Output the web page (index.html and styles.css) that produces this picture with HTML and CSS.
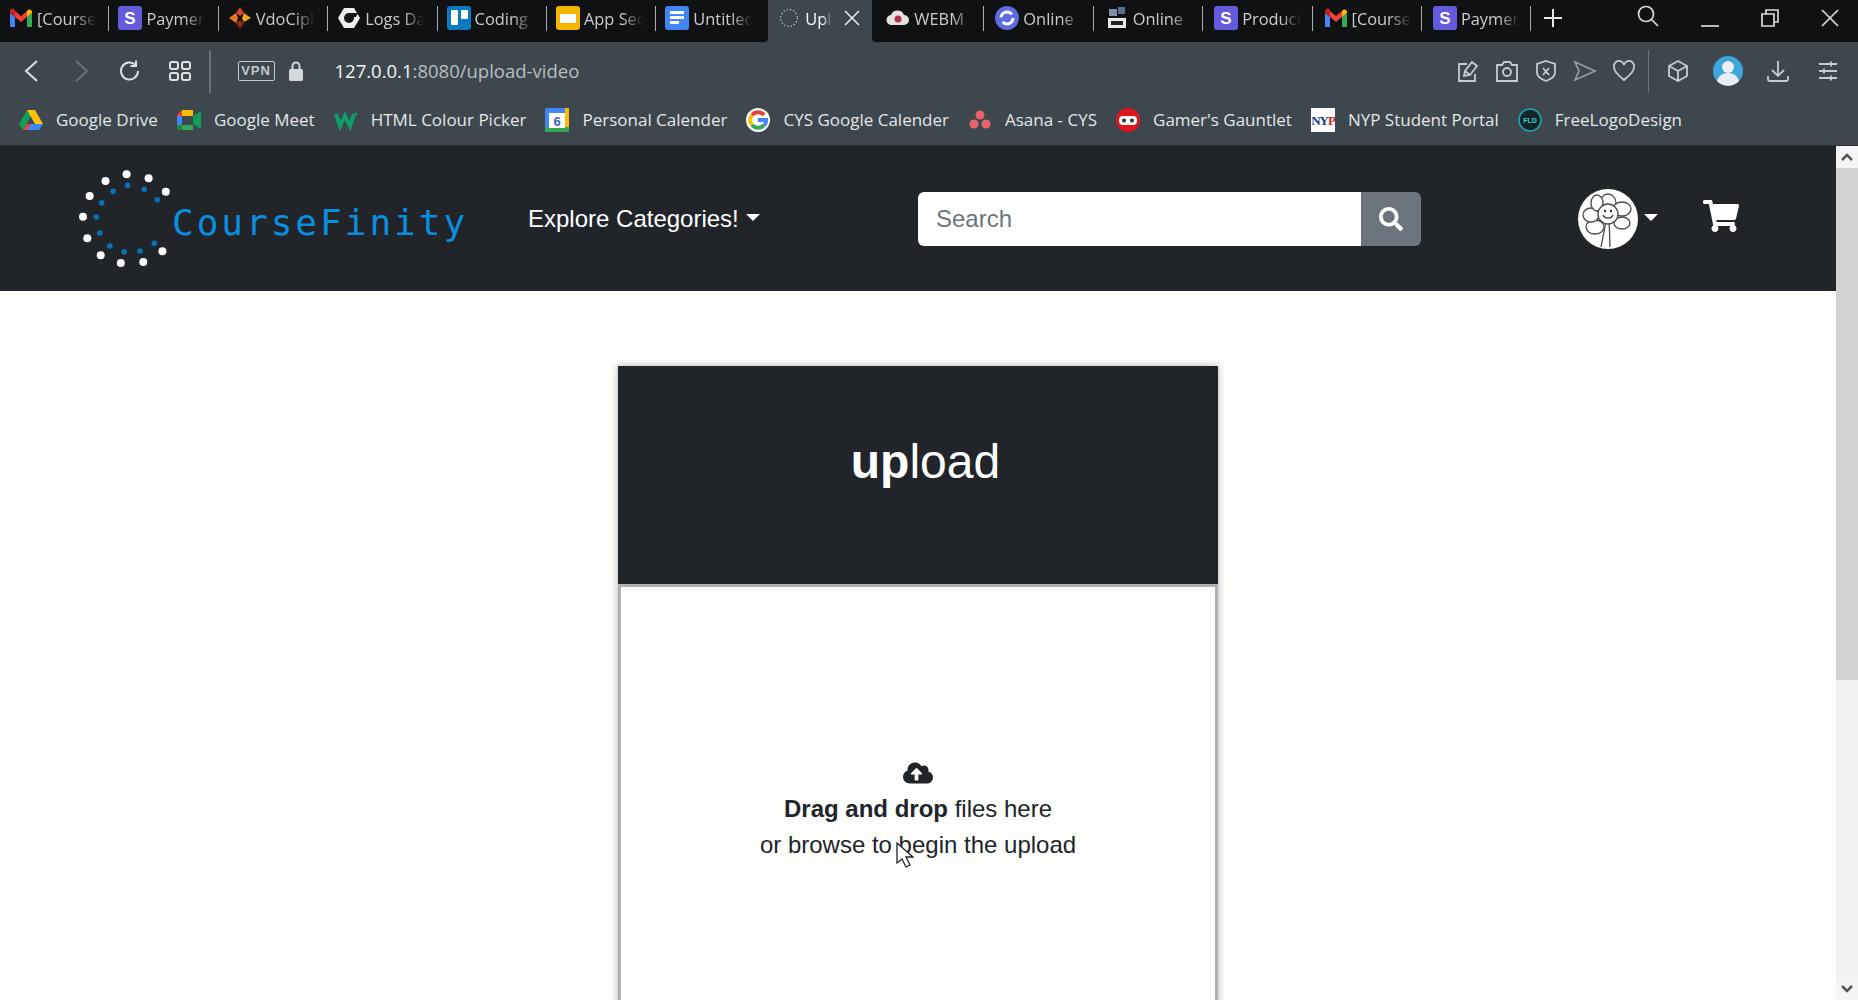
FILE: index.html
```html
<!DOCTYPE html>
<html lang="en">
<head>
    <meta charset="utf-8">
    <title>CourseFinity - upload video</title>
    <link rel="stylesheet" href="styles.css">
</head>
<body>
<svg class="defs" width="0" height="0">
    <symbol id="gmail" viewBox="0 0 24 20">
        <path fill="#4285f4" d="M1 19V5l5 4v10H2a1 1 0 0 1-1-1z"/>
        <path fill="#34a853" d="M18 19V9l5-4v13a1 1 0 0 1-1 1z"/>
        <path fill="#ea4335" d="M6 9V3l6 5 6-5v6l-6 5z"/>
        <path fill="#c5221f" d="M1 5V3c0-2 2.500-3 4-2l1 1v7z"/>
        <path fill="#fbbc04" d="M18 3l1-1c1.500-1 4 0 4 2v1l-5 4z"/>
    </symbol>
    <symbol id="stripe" viewBox="0 0 24 24">
        <rect width="24" height="24" rx="3" fill="#635bdb"/>
        <text x="12" y="18" text-anchor="middle" class="stripe-s">S</text>
    </symbol>
</svg>

<div class="tabbar">
    <div class="tabgroup">
        <div class="tab"><svg class="fav fav-mail"><use href="#gmail"/></svg><span class="tabname">[Course</span></div>
        <div class="tab"><svg class="fav"><use href="#stripe"/></svg><span class="tabname">Payment</span></div>
        <div class="tab">
            <svg class="fav" viewBox="0 0 24 24"><path fill="#d9452b" d="M12 1l4 6-4 3-4-3z"/><path fill="#f2a51f" d="M23 12l-7 4-2-4 2-5z"/><path fill="#8c2a1a" d="M12 23l-4-6 4-3 4 3z"/><path fill="#e8791d" d="M1 12l7-5 2 5-2 5z"/></svg>
            <span class="tabname">VdoCipher</span>
        </div>
        <div class="tab">
            <svg class="fav" viewBox="0 0 24 24"><path fill="#eee" d="M7 2h10l6 10-6 10H7L1 12z"/><circle cx="12" cy="12" r="5" fill="#15171a"/><path fill="#15171a" d="M12 7h9l-2 4h-7z"/></svg>
            <span class="tabname">Logs Data</span>
        </div>
        <div class="tab">
            <svg class="fav" viewBox="0 0 24 24"><rect width="24" height="24" rx="3" fill="#0a79bf"/><rect x="4" y="4" width="7" height="15" rx="1" fill="#fff"/><rect x="14" y="4" width="7" height="9" rx="1" fill="#fff"/></svg>
            <span class="tabname">Coding</span>
        </div>
        <div class="tab">
            <svg class="fav" viewBox="0 0 24 24"><rect width="24" height="24" rx="3" fill="#f4b400"/><rect x="4" y="8" width="16" height="9" fill="#fff"/></svg>
            <span class="tabname">App Sec</span>
        </div>
        <div class="tab tab-noline">
            <svg class="fav" viewBox="0 0 24 24"><rect width="24" height="24" rx="3" fill="#4285f4"/><rect x="5" y="5" width="14" height="3" fill="#fff"/><rect x="5" y="10" width="14" height="3" fill="#fff"/><rect x="5" y="15" width="9" height="3" fill="#fff"/></svg>
            <span class="tabname">Untitled</span>
        </div>
    </div>
    <div class="tab-active">
        <svg class="fav spinner" viewBox="0 0 24 24"><circle cx="12" cy="12" r="10" fill="none" stroke="#cfd3d6" stroke-width="1.500" stroke-dasharray="1.500 2.500"/></svg>
        <span class="tabname tabname-short">Upload</span>
        <svg class="tabclose" viewBox="0 0 16 16"><path d="M1 1l14 14M15 1L1 15"/></svg>
    </div>
    <div class="tabgroup tabgroup-right">
        <div class="tab">
            <svg class="fav" viewBox="0 0 24 24"><path fill="#e6e2e2" d="M6 19a5 5 0 0 1-1-10 7 7 0 0 1 13 0 5 5 0 0 1 0 10z"/><circle cx="12" cy="13" r="3.500" fill="#b5304a"/></svg>
            <span class="tabname">WEBM</span>
        </div>
        <div class="tab">
            <svg class="fav" viewBox="0 0 24 24"><circle cx="12" cy="12" r="12" fill="#5c6ce0"/><circle cx="12" cy="12" r="6" fill="none" stroke="#fff" stroke-width="3" stroke-dasharray="14 5"/></svg>
            <span class="tabname">Online</span>
        </div>
        <div class="tab">
            <svg class="fav" viewBox="0 0 24 24"><rect x="4" y="3" width="8" height="7" fill="#7d8fa8"/><rect x="13" y="1" width="7" height="7" fill="#5a6f8e"/><rect x="3" y="12" width="18" height="10" fill="#e8e8e8"/><rect x="6" y="15" width="12" height="4" fill="#222"/></svg>
            <span class="tabname">Online</span>
        </div>
        <div class="tab"><svg class="fav"><use href="#stripe"/></svg><span class="tabname">Product</span></div>
        <div class="tab"><svg class="fav fav-mail"><use href="#gmail"/></svg><span class="tabname">[Course</span></div>
        <div class="tab"><svg class="fav"><use href="#stripe"/></svg><span class="tabname">Payment</span></div>
        <svg class="newtab" viewBox="0 0 18 18"><path d="M9 0v18M0 9h18"/></svg>
        <div class="winbtns">
            <svg class="winbtn" viewBox="0 0 22 22"><circle cx="9" cy="9" r="7.500"/><path d="M14.500 14.500L21 21"/></svg>
            <svg class="winbtn" viewBox="0 0 18 18"><path d="M0 17h18"/></svg>
            <svg class="winbtn" viewBox="0 0 18 18"><path d="M1 5h12v12H1zM5 5V1h12v12h-4"/></svg>
            <svg class="winbtn" viewBox="0 0 18 18"><path d="M1 1l16 16M17 1L1 17"/></svg>
        </div>
    </div>
</div>

<div class="toolbar">
    <div class="navbtns">
        <svg class="tool" viewBox="0 0 24 24"><path d="M18 2L7 12l11 10"/></svg>
        <svg class="tool tool-off" viewBox="0 0 24 24"><path d="M7 2l11 10L7 22"/></svg>
        <svg class="tool" viewBox="0 0 24 24"><path d="M20 12a8.500 8.500 0 1 1-2.500-6M18 1.500V7h-5.500"/></svg>
        <svg class="tool" viewBox="0 0 24 24"><rect x="2" y="3" width="8" height="7" rx="2"/><rect x="14" y="3" width="8" height="7" rx="2"/><rect x="2" y="14" width="8" height="7" rx="2"/><rect x="14" y="14" width="8" height="7" rx="2"/></svg>
    </div>
    <div class="vline"></div>
    <span class="vpn">VPN</span>
    <svg class="lock" viewBox="0 0 14 20"><path fill="none" stroke="#d5d8da" stroke-width="2" d="M3.500 9V5a3.500 3.500 0 0 1 7 0v4"/><rect y="8" width="14" height="12" rx="1.500" fill="#d5d8da"/></svg>
    <div class="url">127.0.0.1<span class="url-path">:8080/upload-video</span></div>
    <div class="tools-right">
        <div class="toolset">
            <svg class="tool tool-dim" viewBox="0 0 24 24"><path d="M11 5H3v17h16v-7M8 17l1-5 7-9 5 4-7 9zM9 12l5 4"/></svg>
            <svg class="tool tool-dim" viewBox="0 0 24 24"><path d="M2 6h5l2-3h6l2 3h5v16H2z"/><circle cx="12" cy="13" r="4"/></svg>
            <svg class="tool tool-dim" viewBox="0 0 24 24"><path d="M12 2l9 3v9c0 4-4 6-9 8-5-2-9-4-9-8V5zM9 9l6 7M15 9l-6 7"/></svg>
            <svg class="tool tool-faint" viewBox="0 0 24 24"><path d="M2 3l20 9-20 9 4-9z"/></svg>
            <svg class="tool tool-dim" viewBox="0 0 24 24"><path d="M12 21C5 15 2 12 2 8a5 5 0 0 1 10-2 5 5 0 0 1 10 2c0 4-3 7-10 13z"/></svg>
        </div>
        <div class="vline vline-right"></div>
        <div class="toolset toolset-wide">
            <svg class="tool tool-dim" viewBox="0 0 24 24"><path d="M12 2l9 5v10l-9 5-9-5V7zM3 7l9 5 9-5M12 12v10"/></svg>
            <svg class="profile" viewBox="0 0 30 30"><circle cx="15" cy="15" r="15" fill="#3ea6dc"/><circle cx="15" cy="11" r="6" fill="#e9eff2"/><path fill="#e9eff2" d="M4 25c2-6 6-8 11-8s9 2 11 8a15 15 0 0 1-22 0z"/></svg>
            <svg class="tool tool-dim" viewBox="0 0 24 24"><path d="M12 2v14M6 11l6 6 6-6M2 17v3a2 2 0 0 0 2 2h16a2 2 0 0 0 2-2v-3"/></svg>
            <svg class="tool tool-dim tool-last" viewBox="0 0 24 24"><path d="M3 5h18M3 12h18M3 19h18M15 2.500v5M8 9.500v5M15 16.500v5"/></svg>
        </div>
    </div>
</div>

<div class="bookmarks">
    <a class="bm">
        <svg class="fav" viewBox="0 0 24 24"><path fill="#0f9d58" d="M8 2L0 16l4 6 8-14z"/><path fill="#ffc107" d="M8 2h8l8 14h-8z"/><path fill="#4285f4" d="M4 22l4-6h16l-4 6z"/><path fill="#ea4335" d="M4 22l4-6h4l-4 6z"/></svg>
        Google Drive
    </a>
    <a class="bm">
        <svg class="fav" viewBox="0 0 24 24"><path fill="#fbbc04" d="M5 2h11v6H5z"/><path fill="#ea4335" d="M0 7l5-5v6H0z"/><path fill="#4285f4" d="M0 8h5v9H0z"/><path fill="#34a853" d="M5 17h11v5H5z"/><path fill="#0f9d58" d="M16 8l8-5v18l-8-5z"/><path fill="#1e8e3e" d="M0 17h5v5H2a2 2 0 0 1-2-2z"/></svg>
        Google Meet
    </a>
    <a class="bm">
        <svg class="fav" viewBox="0 0 24 24"><path fill="none" stroke="#0f9d6b" stroke-width="4" d="M2 6l4 12 5-10 5 10 4-12"/><circle cx="22" cy="6" r="1.500" fill="#0f9d6b"/></svg>
        HTML Colour Picker
    </a>
    <a class="bm">
        <svg class="fav" viewBox="0 0 24 24"><rect width="24" height="24" rx="2" fill="#4285f4"/><rect x="0" y="19" width="24" height="5" fill="#34a853"/><rect x="20" y="0" width="4" height="19" fill="#fbbc04"/><rect x="4" y="5" width="16" height="15" fill="#fff"/><text x="12" y="18" text-anchor="middle" class="cal-num">6</text></svg>
        Personal Calender
    </a>
    <a class="bm">
        <svg class="fav" viewBox="0 0 24 24"><circle cx="12" cy="12" r="12" fill="#fff"/><path fill="none" stroke="#ea4335" stroke-width="4" d="M18 7a8 8 0 0 0-12 0"/><path fill="none" stroke="#fbbc04" stroke-width="4" d="M6 7a8 8 0 0 0 0 10"/><path fill="none" stroke="#34a853" stroke-width="4" d="M6 17a8 8 0 0 0 12 0"/><path fill="none" stroke="#4285f4" stroke-width="4" d="M18 17c2-1 2-3 2-5h-8"/></svg>
        CYS Google Calender
    </a>
    <a class="bm">
        <svg class="fav" viewBox="0 0 24 24"><circle cx="12" cy="7" r="4.500" fill="#e8646a"/><circle cx="6" cy="16" r="4.500" fill="#e8646a"/><circle cx="18" cy="16" r="4.500" fill="#e8646a"/></svg>
        Asana - CYS
    </a>
    <a class="bm">
        <svg class="fav" viewBox="0 0 24 24"><circle cx="12" cy="12" r="12" fill="#e0161d"/><rect x="3" y="8" width="18" height="9" rx="4" fill="#f5f5f5"/><circle cx="8" cy="12.500" r="2" fill="#333"/><circle cx="16" cy="12.500" r="2" fill="#333"/></svg>
        Gamer's Gauntlet
    </a>
    <a class="bm">
        <svg class="fav" viewBox="0 0 24 24"><rect width="24" height="24" fill="#fff"/><text x="12" y="17" text-anchor="middle" class="nyp">NY<tspan class="nyp-p">P</tspan></text></svg>
        NYP Student Portal
    </a>
    <a class="bm">
        <svg class="fav" viewBox="0 0 24 24"><circle cx="12" cy="12" r="11" fill="#14252c" stroke="#1ba8b5" stroke-width="1.500"/><text x="12" y="15" text-anchor="middle" class="fld">FLD</text></svg>
        FreeLogoDesign
    </a>
</div>

<div class="viewport">
    <div class="page">
        <nav class="sitenav">
            <a class="brand">
                <svg class="brandmark" viewBox="0 0 97 100">
                    <g fill="#fff">
                        <circle cx="50.600" cy="7.300" r="4"/><circle cx="72.600" cy="11.300" r="4"/><circle cx="89.800" cy="24.700" r="4"/>
                        <circle cx="29.500" cy="14" r="4"/><circle cx="13.700" cy="29" r="4"/><circle cx="7" cy="49.700" r="4"/>
                        <circle cx="11.300" cy="71.300" r="4"/><circle cx="24.700" cy="88.300" r="4"/><circle cx="44.800" cy="96" r="4"/>
                        <circle cx="67.300" cy="95" r="4"/><circle cx="86.400" cy="84.300" r="4"/>
                    </g>
                    <g fill="#0a70b8">
                        <circle cx="51.500" cy="18.300" r="2.800"/><circle cx="68.300" cy="22.300" r="2.800"/><circle cx="81.200" cy="32.700" r="2.800"/>
                        <circle cx="37.200" cy="24.300" r="2.800"/><circle cx="25.700" cy="35.700" r="2.800"/><circle cx="20.400" cy="50" r="2.800"/>
                        <circle cx="23.800" cy="66" r="2.800"/><circle cx="33.800" cy="79" r="2.800"/><circle cx="48.200" cy="84.700" r="2.800"/>
                        <circle cx="64" cy="84" r="2.800"/><circle cx="78.300" cy="76.300" r="2.800"/>
                    </g>
                </svg>
                <span class="brandname">CourseFinity</span>
            </a>
            <a class="explore">Explore Categories!<i class="caret"></i></a>
            <form class="search">
                <input class="search-input" type="text" placeholder="Search">
                <button class="search-btn" type="button">
                    <svg class="search-icon" viewBox="0 0 512 512"><path d="M505 442.700L405.300 343c-4.500-4.500-10.600-7-17-7H372c27.600-35.300 44-79.700 44-128C416 93.100 322.900 0 208 0S0 93.100 0 208s93.100 208 208 208c48.300 0 92.700-16.400 128-44v16.300c0 6.400 2.500 12.500 7 17l99.700 99.700c9.400 9.400 24.600 9.400 33.900 0l28.300-28.300c9.400-9.400 9.400-24.600.1-34zM208 336c-70.700 0-128-57.200-128-128 0-70.700 57.200-128 128-128 70.700 0 128 57.200 128 128 0 70.700-57.200 128-128 128z"/></svg>
                </button>
            </form>
            <a class="account">
                <svg class="avatar" viewBox="0 0 60 60">
                    <circle cx="30" cy="30" r="30" fill="#fff"/>
                    <g fill="#fff" stroke="#4a4a4a" stroke-width="1.300">
                        <path d="M29 27L23 58M31 27l1 31" fill="none"/>
                        <ellipse cx="30" cy="14" rx="8" ry="9"/><ellipse cx="44" cy="20" rx="9" ry="7"/><ellipse cx="44" cy="34" rx="8" ry="6"/>
                        <ellipse cx="17" cy="38" rx="9" ry="7"/><ellipse cx="13" cy="26" rx="8" ry="7"/><ellipse cx="19" cy="14" rx="6" ry="8"/>
                        <circle cx="30" cy="25" r="10"/>
                    </g>
                    <path d="M25 26a5.500 5.500 0 0 0 10 0" fill="none" stroke="#333" stroke-width="1.300"/>
                    <circle cx="27" cy="22" r="1.200" fill="#333"/><circle cx="33" cy="22" r="1.200" fill="#333"/>
                </svg>
                <i class="caret caret-small"></i>
            </a>
            <svg class="cart" viewBox="0 0 576 512"><path d="M528.120 301.319l47.273-208C578.806 78.301 567.391 64 551.990 64H159.208l-9.166-44.810C147.758 8.021 137.930 0 126.529 0H24C10.745 0 0 10.745 0 24v16c0 13.255 10.745 24 24 24h69.883l70.248 343.435C147.325 417.100 136 435.222 136 456c0 30.928 25.072 56 56 56s56-25.072 56-56c0-15.674-6.447-29.835-16.824-40h209.647C430.447 426.165 424 440.326 424 456c0 30.928 25.072 56 56 56s56-25.072 56-56c0-22.172-12.888-41.332-31.579-50.405l5.517-24.276c3.413-15.018-8.002-29.319-23.403-29.319H218.117l-6.545-32h293.145c11.206 0 20.920-7.754 23.403-18.681z"/></svg>
        </nav>

        <main class="content">
            <section class="card">
                <h1 class="card-head"><b>up</b>load</h1>
                <div class="dropzone">
                    <svg class="cloud" viewBox="0 0 640 512"><path d="M537.600 226.600c4.100-10.700 6.400-22.400 6.400-34.600 0-53-43-96-96-96-19.700 0-38.100 6-53.300 16.200C367 64.200 315.300 32 256 32c-88.400 0-160 71.600-160 160 0 2.700.1 5.400.2 8.100C40.200 219.800 0 273.200 0 336c0 79.500 64.500 144 144 144h368c70.700 0 128-57.300 128-128 0-61.900-44-113.600-102.400-125.400zM393.400 288H328v112c0 8.800-7.200 16-16 16h-48c-8.800 0-16-7.200-16-16V288h-65.400c-14.300 0-21.400-17.200-11.300-27.300l105.400-105.400c6.200-6.200 16.400-6.200 22.600 0l105.400 105.400c10.100 10.100 2.900 27.300-11.300 27.300z"/></svg>
                    <p class="dropline"><b>Drag and drop</b> files here</p>
                    <p class="dropline">or browse to begin the upload</p>
                    <svg class="pointer" viewBox="0 0 18 26"><path d="M1 1v20l5-4 4 8 4-2-4-8h7z"/></svg>
                </div>
            </section>
        </main>
    </div>
    <div class="scrollbar">
        <div class="sb-btn"><svg class="sb-arrow" viewBox="0 0 12 8"><path d="M1 7l5-5 5 5"/></svg></div>
        <div class="sb-thumb"></div>
        <div class="sb-track"></div>
        <div class="sb-btn"><svg class="sb-arrow" viewBox="0 0 12 8"><path d="M1 1l5 5 5-5"/></svg></div>
    </div>
</div>
</body>
</html>
```

FILE: styles.css
```css
html, body {
    height: 100%;
    margin: 0;
    overflow: hidden;
}

body {
    display: flex;
    flex-direction: column;
    background: #fdfdfb;
    color: #212529;
    font-family: "Liberation Sans", Arial, sans-serif;
}

.defs {
    display: block;
    height: 0;
}

/* browser chrome */
.tabbar {
    display: flex;
    flex: none;
    height: 42px;
    background: #3e474d;
    font-family: "Open Sans", "Noto Sans", sans-serif;
    font-size: 16.400px;
    color: #c9cdcf;
}

.tabgroup {
    display: flex;
    align-items: center;
    box-sizing: border-box;
    padding-bottom: 6px;
    background: #101113;
    border-bottom-right-radius: 4px;
}

.tabgroup-right {
    flex: 1;
    border-bottom-left-radius: 4px;
    border-bottom-right-radius: 0;
}

.tab {
    display: flex;
    align-items: center;
    flex: none;
    box-sizing: border-box;
    width: 109.400px;
    height: 25px;
    padding-left: 9px;
    gap: 4px;
    border-right: 1px solid #a9aeb2;
    overflow: hidden;
}

.tabgroup-right .tab {
    padding-left: 11px;
}

.tab-noline {
    border-right: none;
    width: 112px;
}

.tabgroup-right .tab:first-child {
    padding-left: 14px;
    width: 112px;
}

.fav {
    flex: none;
    width: 24px;
    height: 24px;
}

.fav-mail {
    height: 20px;
}

.stripe-s {
    font: bold 17px "Liberation Sans", sans-serif;
    fill: #fff;
}

.tabname {
    width: 59px;
    flex: none;
    white-space: nowrap;
    overflow: hidden;
    -webkit-mask-image: linear-gradient(to right, #000 65%, transparent 100%);
    mask-image: linear-gradient(to right, #000 65%, transparent 100%);
}

.tab-active {
    display: flex;
    align-items: center;
    flex: none;
    width: 104px;
    padding: 0 0 6px 11px;
    box-sizing: border-box;
    color: #fff;
}

.spinner {
    width: 20px;
    height: 20px;
    margin-right: 6px;
}

.tabname-short {
    width: 27px;
}

.tabclose {
    width: 16px;
    height: 16px;
    margin-left: 12px;
    fill: none;
    stroke: #eceeef;
    stroke-width: 1.500;
}

.newtab {
    flex: none;
    width: 18px;
    height: 18px;
    margin-left: 13px;
    fill: none;
    stroke: #e8e9ea;
    stroke-width: 2;
}

.winbtns {
    display: flex;
    align-items: center;
    margin-left: 75px;
}

.winbtn {
    width: 18px;
    height: 18px;
    margin-left: 42px;
    fill: none;
    stroke: #d8dadb;
    stroke-width: 1.700;
}

.winbtn:first-child {
    width: 22px;
    height: 22px;
    margin-left: 0;
    margin-top: -4px;
}

.toolbar {
    display: flex;
    align-items: center;
    flex: none;
    height: 58px;
    padding: 0 18px 0 19px;
    background: #3e474d;
}

.navbtns,
.toolset {
    display: flex;
    align-items: center;
}

.navbtns {
    gap: 25.500px;
}

.toolset {
    gap: 15px;
}

.toolset-wide {
    gap: 23px;
}

.tool {
    flex: none;
    width: 24px;
    height: 24px;
    fill: none;
    stroke: #dfe2e4;
    stroke-width: 2;
}

.tool-off {
    stroke: #6a7278;
}

.tool-dim {
    stroke: #c8ccd0;
    stroke-width: 1.800;
}

.tool-faint {
    stroke: #9aa1a6;
    stroke-width: 1.600;
}

.tool-last {
    margin-left: 3px;
}

.profile {
    width: 30px;
    height: 30px;
}

.vline {
    flex: none;
    width: 2px;
    height: 43px;
    margin-left: 17px;
    background: #6b7378;
}

.vline-right {
    width: 1px;
    margin: 0 17px 0 12px;
}

.vpn {
    flex: none;
    box-sizing: border-box;
    width: 37px;
    height: 20px;
    margin-left: 27px;
    border: 1px solid #c4c8cb;
    border-radius: 2px;
    color: #c4c8cb;
    font: bold 13px/18px "Liberation Sans", sans-serif;
    letter-spacing: 1px;
    text-align: center;
}

.lock {
    flex: none;
    width: 14px;
    height: 20px;
    margin-left: 14px;
}

.url {
    margin: 0 0 2px 32px;
    color: #f4f5f6;
    font-family: "Open Sans", "Noto Sans", sans-serif;
    font-size: 18.500px;
}

.url-path {
    color: #b9bec3;
}

.tools-right {
    display: flex;
    align-items: center;
    margin-left: auto;
}

.bookmarks {
    display: flex;
    align-items: center;
    flex: none;
    height: 46px;
    padding: 0 0 6px 19px;
    gap: 19px;
    background: #3e474d;
    border-bottom: 1px solid #2b3034;
    box-sizing: border-box;
    font-family: "Open Sans", "Noto Sans", sans-serif;
    font-size: 17px;
    color: #e4e6e8;
}

.bm {
    display: flex;
    align-items: center;
    gap: 13px;
    white-space: nowrap;
}

.cal-num {
    font: bold 13px "Liberation Sans", sans-serif;
    fill: #3367c4;
}

.nyp {
    font: bold 13px "Liberation Serif", serif;
    fill: #1a3c86;
    letter-spacing: -1px;
}

.nyp-p {
    fill: #d8232a;
}

.fld {
    font: bold 7px "Liberation Sans", sans-serif;
    fill: #3ad0c8;
}

/* page */
.viewport {
    display: flex;
    flex: 1;
    min-height: 0;
}

.page {
    flex: 1;
    min-width: 0;
    overflow: hidden;
}

.sitenav {
    display: flex;
    align-items: center;
    height: 145px;
    padding-left: 76px;
    background: #212529;
    color: #fff;
}

.brand {
    display: flex;
    align-items: center;
    flex: none;
    width: 452px;
}

.brandmark {
    flex: none;
    width: 97px;
    height: 100px;
    margin-bottom: 4px;
}

.brandname {
    margin: 8px 0 0 -1px;
    font-family: "DejaVu Sans Mono", monospace;
    font-size: 36px;
    letter-spacing: 3px;
    color: #0a8ee0;
}

.explore {
    display: flex;
    align-items: center;
    flex: none;
    width: 390px;
    font-size: 24px;
}

.caret {
    width: 0;
    height: 0;
    margin-left: 7px;
    margin-bottom: 3px;
    border-top: 7px solid #fff;
    border-left: 7px solid transparent;
    border-right: 7px solid transparent;
}

.search {
    display: flex;
    flex: none;
    width: 503px;
    height: 54px;
}

.search-input {
    flex: 1;
    min-width: 0;
    box-sizing: border-box;
    padding: 0 18px;
    border: none;
    border-radius: 6px 0 0 6px;
    background: #fff;
    font: 24px "Liberation Sans", sans-serif;
}

.search-input::placeholder {
    color: #6c757d;
    opacity: 1;
}

.search-btn {
    display: flex;
    align-items: center;
    justify-content: center;
    width: 60px;
    padding: 0;
    border: none;
    border-radius: 0 6px 6px 0;
    background: #6c757d;
}

.search-icon {
    width: 24px;
    height: 24px;
    fill: #fff;
}

.account {
    display: flex;
    align-items: center;
    flex: none;
    width: 125px;
    margin-left: 157px;
}

.avatar {
    flex: none;
    width: 60px;
    height: 60px;
}

.caret-small {
    margin-left: 6px;
    margin-bottom: 2px;
}

.cart {
    flex: none;
    width: 36px;
    height: 32px;
    margin-bottom: 5px;
    fill: #fff;
}

.content {
    display: flex;
    justify-content: center;
    padding-top: 75px;
}

.card {
    flex: none;
    width: 600px;
    box-shadow: 0 0 7px rgba(0, 0, 0, .3);
}

.card-head {
    display: flex;
    align-items: center;
    justify-content: center;
    box-sizing: border-box;
    height: 218px;
    margin: 0;
    padding: 0 0 28px 15px;
    background: #212529;
    color: #fff;
    font-size: 48px;
    font-weight: 400;
}

.dropzone {
    display: flex;
    flex-direction: column;
    align-items: center;
    justify-content: center;
    position: relative;
    box-sizing: border-box;
    height: 456px;
    border: 3px solid #b0b0b4;
    background: #fdfdfb;
}

.cloud {
    width: 30px;
    height: 24px;
    margin-bottom: 6px;
    fill: #212529;
}

.dropline {
    margin: 0;
    font-size: 24px;
    line-height: 36px;
}

.pointer {
    position: absolute;
    left: 275px;
    top: 255px;
    width: 18px;
    height: 26px;
    fill: #fff;
    stroke: #222;
    stroke-width: 1.300;
}

.scrollbar {
    display: flex;
    flex-direction: column;
    flex: none;
    width: 22px;
    background: #f1f1f4;
}

.sb-btn {
    display: flex;
    align-items: center;
    justify-content: center;
    flex: none;
    height: 22px;
    background: #f4f4f6;
}

.sb-arrow {
    width: 12px;
    height: 8px;
    fill: none;
    stroke: #555;
    stroke-width: 2.500;
}

.sb-thumb {
    flex: none;
    height: 512px;
    background: #d2d2d4;
}

.sb-track {
    flex: 1;
}
```
